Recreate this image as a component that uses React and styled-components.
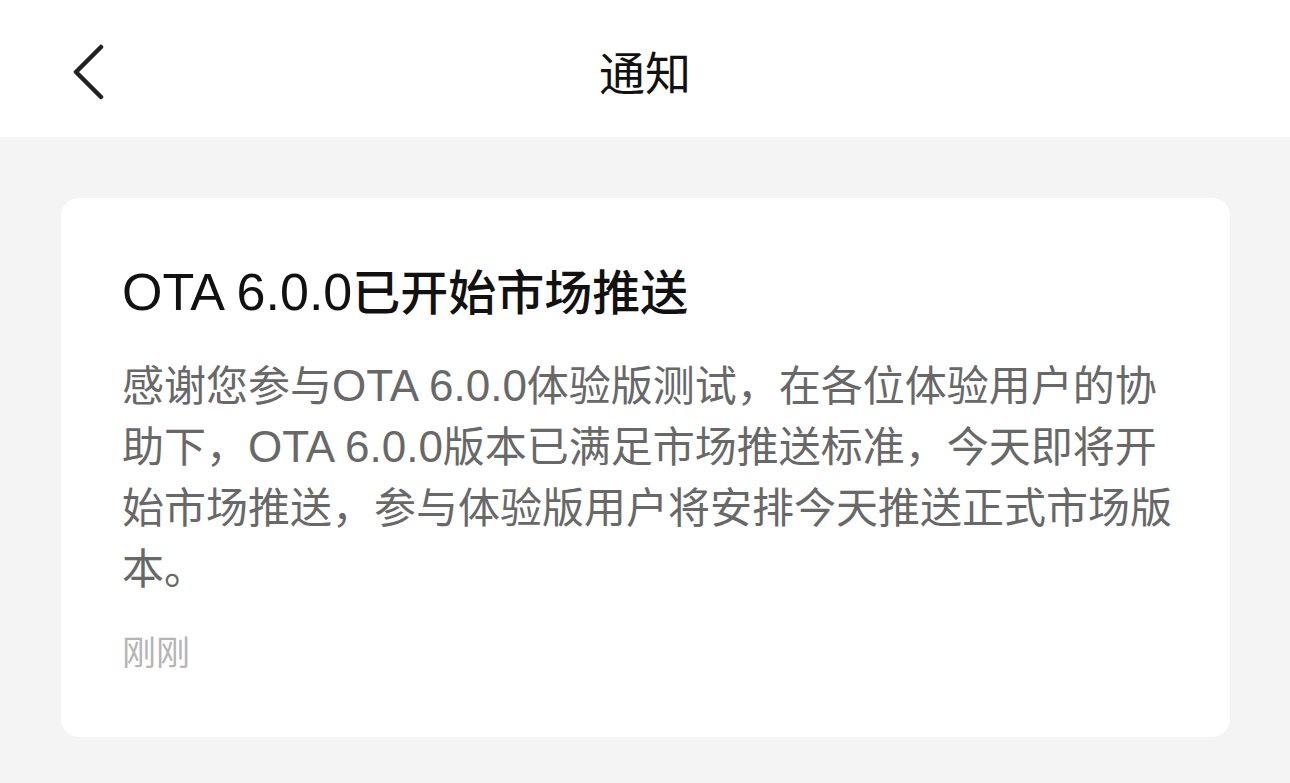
import styled, { createGlobalStyle } from "styled-components";

const GlobalStyle = createGlobalStyle`
    html, body {
        margin: 0;
        padding: 0;
        background: #f4f4f4;
        font-family: "Noto Sans CJK SC", "Noto Sans", sans-serif;
    }
`;

const Page = styled.div`
    min-height: 783px;
    background: #f4f4f4;
`;

const Header = styled.header`
    height: 137px;
    background: #fff;
    display: flex;
    align-items: center;
    justify-content: center;
    position: relative;
`;

const BackButton = styled.button`
    position: absolute;
    left: 64px;
    top: 40px;
    width: 50px;
    height: 64px;
    border: 0;
    padding: 0;
    background: none;
    display: flex;
    align-items: center;
    justify-content: center;
`;

const HeaderTitle = styled.h1`
    margin: 0;
    font-size: 46px;
    font-weight: 400;
    color: #111;
    line-height: 1;
    margin-top: 2px;
`;

const Body = styled.main`
    padding: 61px 60px 0 61px;
`;

const Card = styled.section`
    background: #fff;
    border-radius: 18px;
    padding: 61px 50px 65px 61px;
`;

const Title = styled.h2`
    margin: 0 0 33px;
    font-size: 48px;
    line-height: 60px;
    font-weight: 500;
    color: #111;
`;

const Content = styled.p`
    margin: 0 0 34px;
    font-size: 42px;
    line-height: 61px;
    color: #686868;
`;

const Latin = styled.span`
    font-family: "Liberation Sans", Arial, sans-serif;
    font-size: ${(p) => p.$size}px;
    font-weight: 400;
    line-height: 1;
`;

const Time = styled.div`
    font-size: 34px;
    line-height: 42px;
    color: #b5b5b5;
`;

export default function App() {
    return (
        <Page>
            <GlobalStyle />
            <Header>
                <BackButton aria-label="back">
                    <svg width="34" height="56" viewBox="0 0 34 56" fill="none">
                        <path d="M29 3 L4 28 L29 53" stroke="#222" strokeWidth="4.5" strokeLinecap="round" strokeLinejoin="round" />
                    </svg>
                </BackButton>
                <HeaderTitle>通知</HeaderTitle>
            </Header>
            <Body>
                <Card>
                    <Title>
                        <Latin $size={52}>OTA 6.0.0</Latin>已开始市场推送
                    </Title>
                    <Content>
                        感谢您参与<Latin $size={44}>OTA 6.0.0</Latin>体验版测试，在各位体验用户的协助下，<Latin $size={44}>OTA 6.0.0</Latin>版本已满足市场推送标准，今天即将开始市场推送，参与体验版用户将安排今天推送正式市场版本。
                    </Content>
                    <Time>刚刚</Time>
                </Card>
            </Body>
        </Page>
    );
}
